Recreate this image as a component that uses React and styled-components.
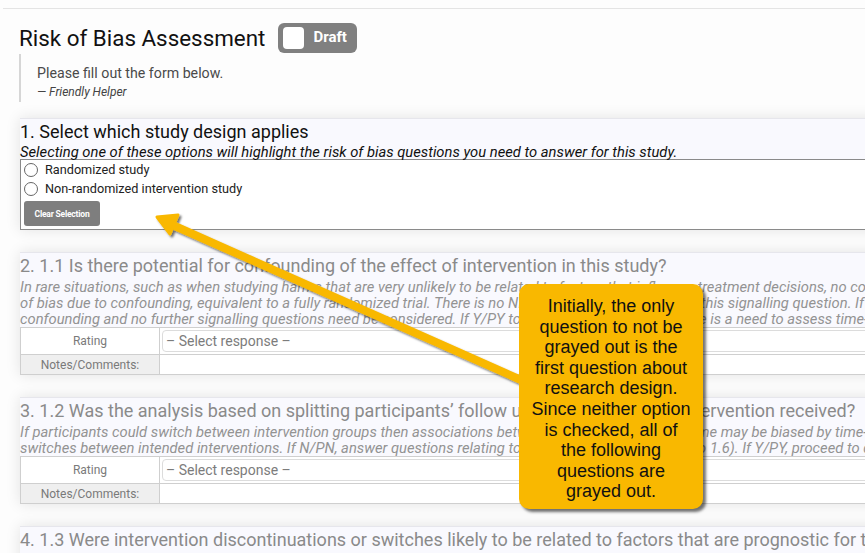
import React from "react";
import styled, { createGlobalStyle } from "styled-components";

const GlobalStyle = createGlobalStyle`
  html, body { margin: 0; padding: 0; overflow: hidden; background: #fdfdfd; }
  body { font-family: Roboto, "Liberation Sans", sans-serif; }
  * { box-sizing: border-box; }
`;

const Page = styled.div`
  position: relative;
  width: 865px;
  height: 553px;
  overflow: hidden;
`;

const TopBar = styled.div`
  height: 9px;
  margin-left: 3px;
  border-bottom: 1px solid #e4e4e4;
`;

const Main = styled.div`
  padding-left: 20px;
  width: 1300px;
`;

const TitleRow = styled.div`
  display: flex;
  align-items: center;
  gap: 13px;
  margin-top: 14px;
  height: 30px;
`;

const Title = styled.h1`
  margin: 0 0 0 -1px;
  font-size: 22.4px;
  line-height: 30px;
  font-weight: 400;
  color: #111;
`;

const Toggle = styled.div`
  display: flex;
  align-items: center;
  gap: 9px;
  width: 79px;
  height: 30px;
  padding-left: 5px;
  border-radius: 6px;
  background: #808080;
`;

const ToggleBox = styled.span`
  width: 21px;
  height: 22px;
  border-radius: 4px;
  background: #fff;
`;

const ToggleLabel = styled.span`
  color: #fff;
  font-weight: 700;
  font-size: 15px;
  margin-top: -3px;
`;

const Quote = styled.blockquote`
  margin: 1px 0 0 -1px;
  border-left: 2px solid #d6d6d6;
  padding: 10px 0 2px 16px;
`;

const QuoteText = styled.div`
  font-size: 14.2px;
  line-height: 19px;
  color: #4a4a4a;
`;

const QuoteAuthor = styled.div`
  margin-top: 1px;
  font-size: 12px;
  line-height: 16px;
  font-style: italic;
  color: #444;
`;

const Cards = styled.div`
  display: flex;
  flex-direction: column;
  gap: 22px;
  margin-top: 16px;
`;

const Card = styled.section`
  background: #f9f9fe;
  border-top: 1px solid #e6e6ec;
  box-shadow: 0 0 14px rgba(0, 0, 0, 0.11);
  color: ${(p) => (p.$muted ? "#8a8a8a" : "#111")};
`;

const QTitle = styled.div`
  font-size: 18px;
  line-height: 26px;
`;

const QDesc = styled.div`
  font-size: 14.75px;
  line-height: ${(p) => (p.$tight ? "14px" : "16px")};
  font-style: italic;
  white-space: nowrap;
  color: ${(p) => (p.$muted ? "#939393" : "#111")};
`;

const OptionBox = styled.div`
  background: #fff;
  border: 1px solid #8a8a8a;
  padding-bottom: 3px;
`;

const OptionRow = styled.label`
  display: flex;
  align-items: center;
  gap: 7px;
  height: 19px;
  padding-left: 3px;
  font-size: 12.7px;
  color: #222;
`;

const Radio = styled.span`
  width: 14px;
  height: 14px;
  border-radius: 50%;
  border: 1px solid #666;
  background: #fff;
`;

const ClearButton = styled.button`
  display: block;
  margin: 3px 0 0 3px;
  width: 76px;
  height: 25px;
  border: none;
  border-radius: 3px;
  background: #7e7e7e;
  color: #fff;
  font-family: Roboto, "Liberation Sans", sans-serif;
  font-weight: 700;
  font-size: 8.5px;
  letter-spacing: -0.2px;
  padding: 0;
`;

const Table = styled.div`
  display: grid;
  grid-template-columns: 139px 1fr;
  border: 1px solid #cfcfcf;
  border-bottom: none;
  background: #fff;
`;

const LabelCell = styled.div`
  height: ${(p) => p.$h}px;
  display: flex;
  align-items: center;
  justify-content: center;
  font-size: 12px;
  color: #7a7a7a;
  font-style: normal;
  background: ${(p) => (p.$shade ? "#efefef" : "#fff")};
  border-right: 1px solid #cfcfcf;
  border-bottom: 1px solid #cfcfcf;
`;

const ValueCell = styled.div`
  height: ${(p) => p.$h}px;
  padding: 2px 3px 2px 2px;
  border-bottom: 1px solid #cfcfcf;
`;

const Select = styled.div`
  height: 22px;
  border: 1px solid #dcdcdc;
  border-radius: 4px;
  padding-left: 3px;
  font-size: 14px;
  line-height: 20px;
  color: #7c7c7c;
`;

const Overlay = styled.svg`
  position: absolute;
  left: 0;
  top: 0;
  pointer-events: none;
`;

const Callout = styled.div`
  position: absolute;
  left: 519px;
  top: 284px;
  width: 184px;
  height: 225px;
  border-radius: 10px;
  background: #f9b800;
  box-shadow: 3px 3px 3px rgba(0, 0, 0, 0.55);
  padding-top: 12px;
  text-align: center;
  white-space: nowrap;
  font-family: "Liberation Sans", Arial, sans-serif;
  font-size: 18px;
  line-height: 20.6px;
  color: #111;
`;

const ratingRows = (
  <Table>
    <LabelCell $h={27}>Rating</LabelCell>
    <ValueCell $h={27}>
      <Select>– Select response –</Select>
    </ValueCell>
    <LabelCell $h={20} $shade>Notes/Comments:</LabelCell>
    <ValueCell $h={20} />
  </Table>
);

export default function App() {
  return (
    <Page>
      <GlobalStyle />
      <TopBar />
      <Main>
        <TitleRow>
          <Title>Risk of Bias Assessment</Title>
          <Toggle>
            <ToggleBox />
            <ToggleLabel>Draft</ToggleLabel>
          </Toggle>
        </TitleRow>
        <Quote>
          <QuoteText>Please fill out the form below.</QuoteText>
          <QuoteAuthor>— Friendly Helper</QuoteAuthor>
        </Quote>
        <Cards>
          <Card>
            <QTitle>1. Select which study design applies</QTitle>
            <QDesc $tight>
              Selecting one of these options will highlight the risk of bias questions you need to answer for this study.
            </QDesc>
            <OptionBox>
              <OptionRow>
                <Radio />
                Randomized study
              </OptionRow>
              <OptionRow>
                <Radio />
                Non-randomized intervention study
              </OptionRow>
              <ClearButton>Clear Selection</ClearButton>
            </OptionBox>
          </Card>

          <Card $muted>
            <QTitle>2. 1.1 Is there potential for confounding of the effect of intervention in this study?</QTitle>
            <QDesc $muted>
              In rare situations, such as when studying harms that are very unlikely to be related to factors that influence treatment decisions, no confounding is expected and the study can be considered to be at low risk
              <br />
              of bias due to confounding, equivalent to a fully randomized trial. There is no NI (No information) option for this signalling question. If N/PN to 1.1: the study can be considered to be at low risk of bias due to
              <br />
              confounding and no further signalling questions need be considered. If Y/PY to 1.1: determine whether there is a need to assess time-varying confounding.
            </QDesc>
            {ratingRows}
          </Card>

          <Card $muted>
            <QTitle>3. 1.2 Was the analysis based on splitting participants’ follow up time according to intervention received?</QTitle>
            <QDesc $muted>
              If participants could switch between intervention groups then associations between intervention and outcome may be biased by time-varying confounding. This occurs when prognostic factors influence
              <br />
              switches between intended interventions. If N/PN, answer questions relating to baseline confounding (1.4 to 1.6). If Y/PY, proceed to question 1.3.
            </QDesc>
            {ratingRows}
          </Card>

          <Card $muted>
            <QTitle>4. 1.3 Were intervention discontinuations or switches likely to be related to factors that are prognostic for the outcome?</QTitle>
            <QDesc $muted>
              If intervention discontinuations or switches are unlikely to be related to prognostic factors, then time-varying confounding is not a concern.
            </QDesc>
            {ratingRows}
          </Card>
        </Cards>
      </Main>

      <Overlay width="865" height="553" viewBox="0 0 865 553">
        <defs>
          <filter id="arrowShadow" x="-10%" y="-10%" width="130%" height="130%">
            <feDropShadow dx="2" dy="2" stdDeviation="1.2" floodColor="#000" floodOpacity="0.55" />
          </filter>
        </defs>
        <g filter="url(#arrowShadow)">
          <line x1="168" y1="223" x2="521" y2="380" stroke="#f9b800" strokeWidth="8" strokeLinecap="round" />
          <polygon
            points="157,217 178,215 170,234"
            fill="#f9b800"
            stroke="#f9b800"
            strokeWidth="3"
            strokeLinejoin="round"
          />
        </g>
      </Overlay>
      <Callout>
        Initially, the only
        <br />
        question to not be
        <br />
        grayed out is the
        <br />
        first question about
        <br />
        research design.
        <br />
        Since neither option
        <br />
        is checked, all of
        <br />
        the following
        <br />
        questions are
        <br />
        grayed out.
      </Callout>
    </Page>
  );
}
